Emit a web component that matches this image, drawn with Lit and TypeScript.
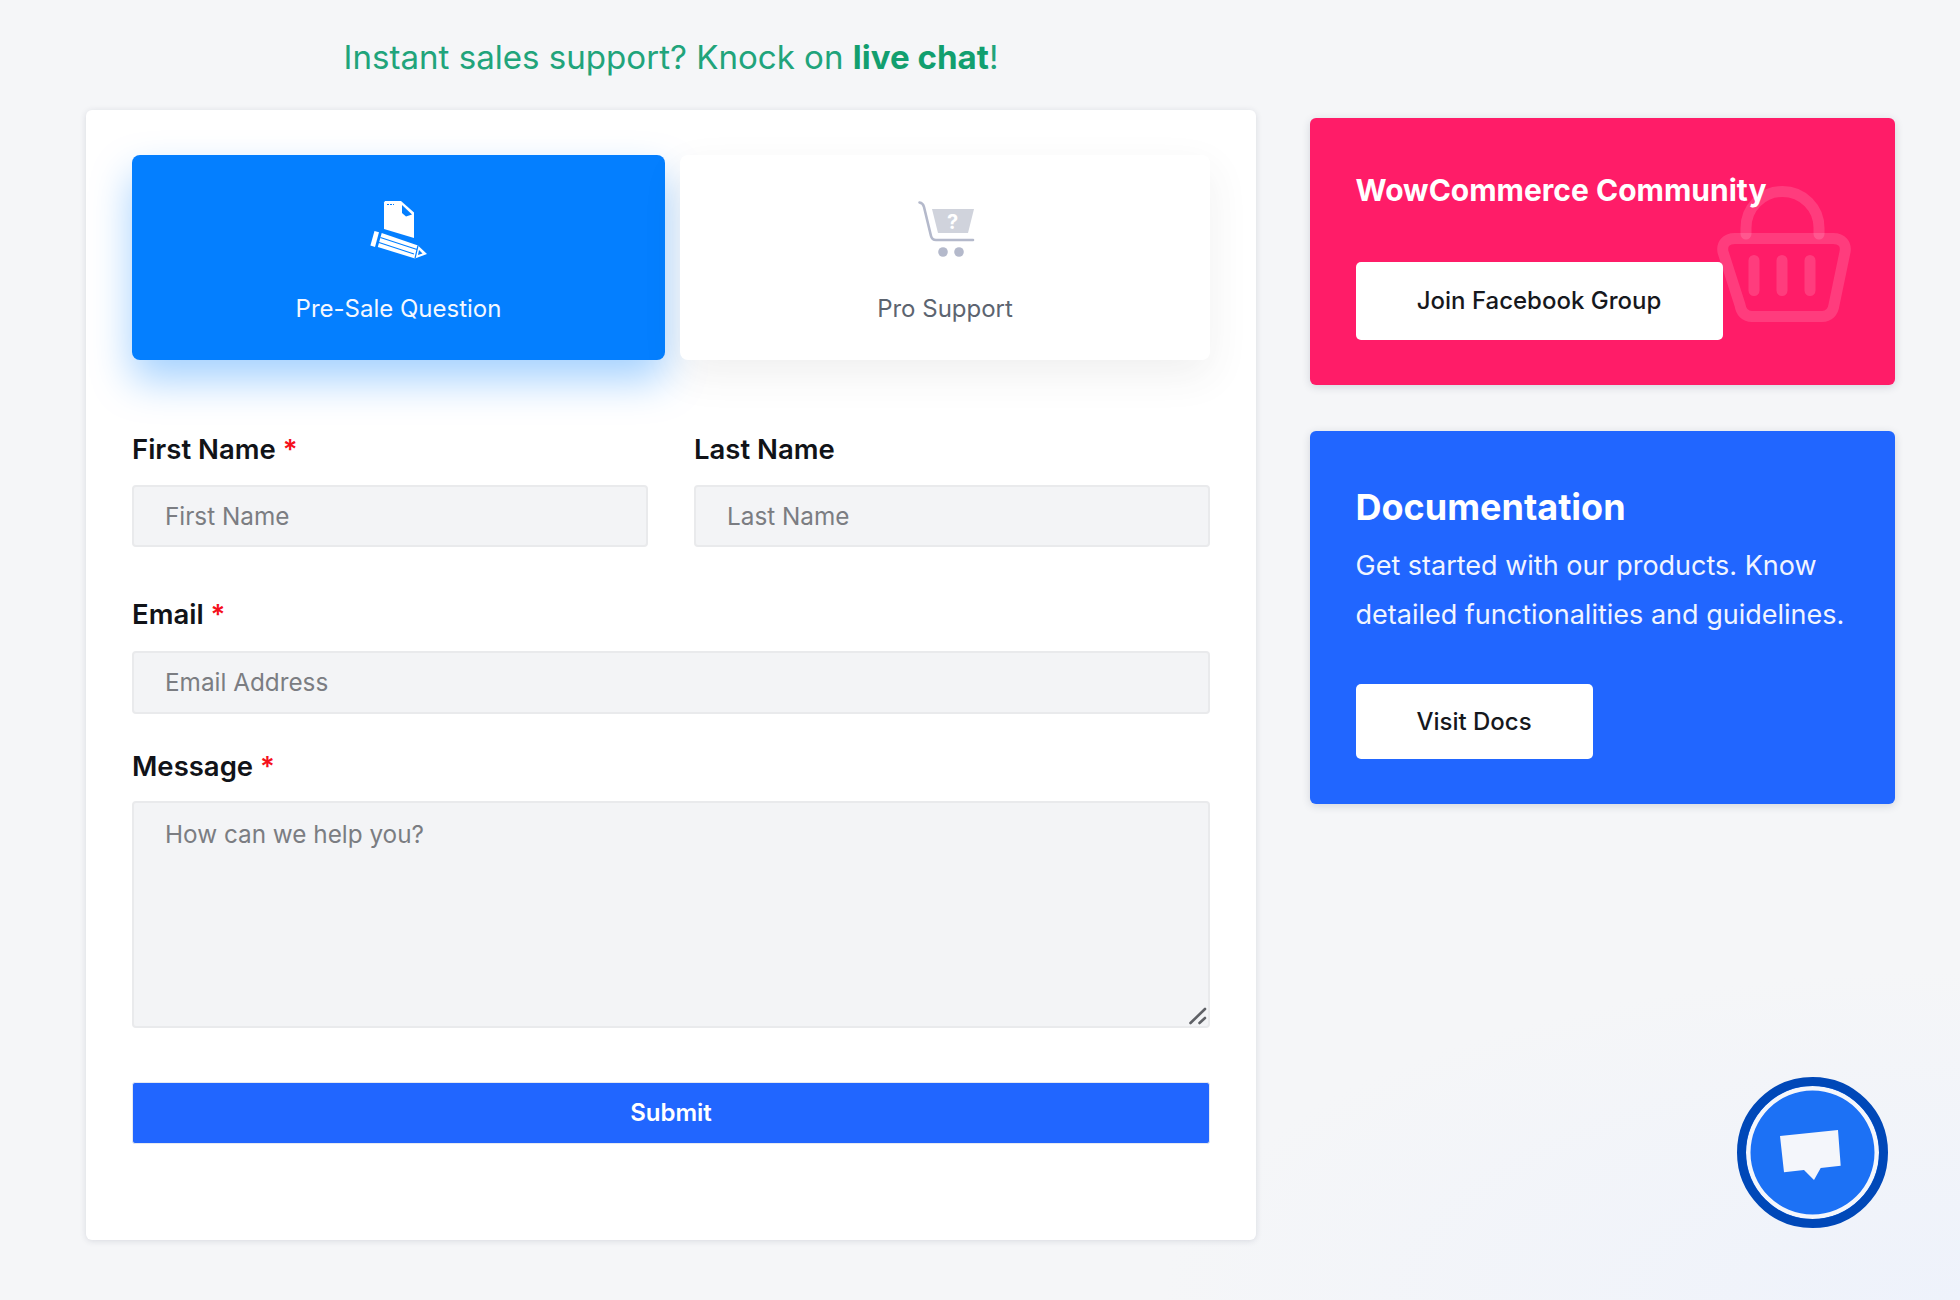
import { LitElement, html, css } from 'lit'
import { customElement } from 'lit/decorators.js'

@customElement('app-root')
export class AppRoot extends LitElement {
  static styles = css`
    :host {
      display: block;
      min-height: 1300px;
      font-family: Inter, "Liberation Sans", sans-serif;
      background:
        radial-gradient(ellipse 800px 330px at 100% 100%, #eef2fb 0%, rgba(238, 242, 251, 0) 100%),
        #f5f6f8;
      position: relative;
      overflow: hidden;
    }

    .page {
      display: flex;
      gap: 54px;
      padding-left: 86px;
      align-items: flex-start;
    }

    .left {
      width: 1170px;
      flex: none;
    }

    .headline {
      margin: 0;
      padding: 39px 0 35px;
      font-size: 33.1px;
      line-height: 36px;
      font-weight: 400;
      text-align: center;
      color: #21a47b;
    }

    .headline b {
      font-weight: 700;
      color: #129f6f;
    }

    .card {
      background: #fff;
      border-radius: 6px;
      box-shadow: 0 1px 6px rgba(40, 50, 80, 0.14);
      padding: 45px 46px 96px;
    }

    .tabs {
      display: grid;
      grid-template-columns: 533px 1fr;
      gap: 15px;
    }

    .tab {
      height: 205px;
      box-sizing: border-box;
      padding-top: 45px;
      border-radius: 8px;
      display: flex;
      flex-direction: column;
      align-items: center;
      font-size: 24px;
      line-height: 30px;
      background: #fff;
      color: #5c6470;
      box-shadow: 0 15px 40px rgba(60, 60, 70, 0.08);
    }

    .tab.active {
      background: #047fff;
      color: #f4f8ff;
      box-shadow: 0 20px 40px rgba(4, 127, 255, 0.36);
    }

    .tab svg {
      display: block;
      margin-bottom: 34px;
    }

    .row {
      display: grid;
      grid-template-columns: 1fr 1fr;
      gap: 46px;
    }

    .field {
      display: flex;
      flex-direction: column;
    }

    .names {
      margin-top: 74px;
    }

    .names label {
      margin-bottom: 21px;
    }

    .email {
      margin-top: 52px;
    }

    .email label {
      margin-bottom: 22px;
    }

    .email input {
      height: 63px;
    }

    .message {
      margin-top: 37px;
    }

    .message label {
      margin-bottom: 20px;
    }

    label {
      font-size: 27.5px;
      line-height: 30px;
      font-weight: 600;
      color: #111318;
    }

    label span {
      color: #f5101c;
    }

    input,
    textarea {
      box-sizing: border-box;
      width: 100%;
      margin: 0;
      border: 2px solid #e9eaec;
      border-radius: 4px;
      background: #f3f4f6;
      font: 400 24.3px/30px Inter, "Liberation Sans", sans-serif;
      color: #333;
      padding: 0 31px;
      outline: none;
    }

    input {
      height: 62px;
      padding-bottom: 1px;
    }

    .area {
      position: relative;
    }

    textarea {
      display: block;
      height: 227px;
      padding-top: 16px;
      padding-bottom: 17px;
      resize: none;
    }

    .grip {
      position: absolute;
      right: 3px;
      bottom: 3px;
      pointer-events: none;
    }

    input::placeholder,
    textarea::placeholder {
      color: #7b7d82;
      opacity: 1;
    }

    .submit {
      display: block;
      width: 100%;
      height: 62px;
      margin-top: 54px;
      border: 1px solid #e4e8f2;
      border-radius: 3px;
      background: #2166ff;
      color: #fff;
      font: 600 24px/30px Inter, "Liberation Sans", sans-serif;
      padding: 0;
    }

    .side {
      width: 585px;
      flex: none;
      margin-top: 118px;
      display: flex;
      flex-direction: column;
      gap: 46px;
    }

    .promo {
      position: relative;
      overflow: hidden;
      border-radius: 6px;
      box-shadow: 0 2px 8px rgba(40, 50, 80, 0.16);
      padding-left: 45.5px;
      padding-right: 46px;
      color: #fff;
    }

    .pink {
      background: #ff1c68;
      padding-top: 55px;
      padding-bottom: 45px;
    }

    .blue {
      background: #2166ff;
      padding-top: 54px;
      padding-bottom: 45px;
    }

    .promo h3 {
      position: relative;
      margin: 0;
      font-weight: 700;
    }

    .pink h3 {
      font-size: 30px;
      line-height: 34px;
      margin-bottom: 55px;
    }

    .blue h3 {
      font-size: 36px;
      line-height: 44px;
      margin-bottom: 12px;
    }

    .promo p {
      margin: 0 0 45px;
      font-size: 27px;
      line-height: 49px;
      color: #f1f5ff;
    }

    .btn {
      position: relative;
      display: inline-block;
      border: none;
      border-radius: 5px;
      background: #fff;
      color: #16181d;
      font: 500 24px/30px Inter, "Liberation Sans", sans-serif;
      padding: 0;
    }

    .pink .btn {
      width: 367px;
      height: 78px;
    }

    .blue .btn {
      width: 237px;
      height: 75px;
    }

    .basket {
      position: absolute;
      left: 407px;
      top: 68px;
    }

    .chat {
      position: absolute;
      left: 1737px;
      top: 1077px;
      width: 151px;
      height: 151px;
      box-sizing: border-box;
      border-radius: 50%;
      border: 9px solid #0048b8;
      background: #1c71f5;
      box-shadow: inset 0 0 0 4.5px #f5f7fc;
    }

    .chat svg {
      position: absolute;
      left: -9px;
      top: -9px;
    }
  `

  render () {
    return html`
      <div class="page">
        <div class="left">
          <h2 class="headline">Instant sales support? Knock on <b>live chat</b>!</h2>
          <div class="card">
            <div class="tabs">
              <div class="tab active">
                <svg width="60" height="60" viewBox="0 0 60 60">
                  <path fill="#fff" d="M16 1H32L45 12.500V38L15 29V2.500Z"/>
                  <path fill="#047fff" d="M33 5L43 14.500L37 16.500L33 13Z"/>
                  <path stroke="#047fff" stroke-width="1.2" stroke-dasharray="2 1" d="M18 4.500H25"/>
                  <path fill="#fff" d="M5.500 31L10 32.300L6 47L1.400 45.500Z"/>
                  <path fill="#fff" d="M12.700 33L49 45.500L58 54L46 58.500L8.800 47Z"/>
                  <path stroke="#047fff" stroke-width="1.200" fill="none" d="M11.400 37.500L48 49.500M10 42.500L45 54M49 45.500L46 58.500"/>
                  <path fill="#047fff" d="M50 50L53.500 53.500L49 55Z"/>
                </svg>
                Pre-Sale Question
              </div>
              <div class="tab">
                <svg width="60" height="60" viewBox="0 0 60 60">
                  <path fill="#d0d3dc" d="M17 9H59L53 33H23Z"/>
                  <text x="37.500" y="29" text-anchor="middle" fill="#fff" font-size="20" font-weight="700" font-family="Inter, sans-serif">?</text>
                  <path fill="none" stroke="#b4b9cb" stroke-width="2.600" stroke-linecap="round" d="M4.500 2.500Q8 3 9 7L16 36Q17 40 21 40H58"/>
                  <circle cx="28" cy="52" r="4.800" fill="#b4b9cb"/>
                  <circle cx="44" cy="52" r="4.800" fill="#b4b9cb"/>
                </svg>
                Pro Support
              </div>
            </div>
            <div class="row names">
              <div class="field">
                <label>First Name <span>*</span></label>
                <input placeholder="First Name">
              </div>
              <div class="field">
                <label>Last Name</label>
                <input placeholder="Last Name">
              </div>
            </div>
            <div class="field email">
              <label>Email <span>*</span></label>
              <input placeholder="Email Address">
            </div>
            <div class="field message">
              <label>Message <span>*</span></label>
              <div class="area">
                <textarea placeholder="How can we help you?"></textarea>
                <svg class="grip" width="20" height="20" viewBox="0 0 20 20" fill="none" stroke="#5f6166" stroke-width="2.600" stroke-linecap="round">
                  <path d="M3.500 18L18 4M12.500 18L18 13"/>
                </svg>
              </div>
            </div>
            <button class="submit">Submit</button>
          </div>
        </div>
        <div class="side">
          <div class="promo pink">
            <svg class="basket" width="134" height="136" viewBox="0 0 134 136" fill="none" stroke="rgba(255,255,255,0.14)" stroke-width="11" stroke-linecap="round">
              <path d="M18 52.500H116C125 52.500 129.500 58 128 66L117 119C116 126 112 130.500 105 130.500H35C28 130.500 24 126 23 119L6 66C4.500 58 9 52.500 18 52.500Z"/>
              <path d="M29 48V42A36.500 36.500 0 0 1 102 42V48"/>
              <path d="M37 74.500V104.500M65 74.500V104.500M93 74.500V104.500"/>
            </svg>
            <h3>WowCommerce Community</h3>
            <button class="btn">Join Facebook Group</button>
          </div>
          <div class="promo blue">
            <h3>Documentation</h3>
            <p>Get started with our products. Know detailed functionalities and guidelines.</p>
            <button class="btn">Visit Docs</button>
          </div>
        </div>
      </div>
      <div class="chat">
        <svg width="151" height="151" viewBox="0 0 151 151">
          <path fill="#f4f6fb" d="M43 59L101 53L103.700 88.700L83.700 91L77 103L67 93L47 95.300Z"/>
        </svg>
      </div>
    `
  }
}
